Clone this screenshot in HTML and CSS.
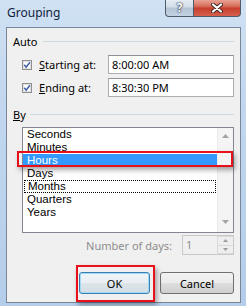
FILE: index.html
```html
<!DOCTYPE html>
<html lang="en">
<head>
    <meta charset="UTF-8">
    <title>Grouping</title>
    <link rel="stylesheet" href="styles.css">
</head>
<body>

    <div class="window">
        <div class="titlebar">
            <span class="title">Grouping</span>
            <div class="caption-btns">
                <div class="cap help">?</div>
                <div class="cap close">
                    <svg width="12" height="10" viewBox="0 0 12 10">
                        <path d="M2 1.5 L10 8.5 M10 1.5 L2 8.5" stroke="#3b2622" stroke-width="4" stroke-linecap="round"/>
                        <path d="M2 1.5 L10 8.5 M10 1.5 L2 8.5" stroke="#fff" stroke-width="2.2" stroke-linecap="round"/>
                    </svg>
                </div>
            </div>
        </div>

        <div class="client">
            <div class="group-head"><span>Auto</span></div>

            <div class="field-row">
                <span class="check">
                    <svg width="10" height="10" viewBox="0 0 10 10">
                        <rect x="0.5" y="0.5" width="9" height="9" fill="#f4f4f4" stroke="#8e8f8f"/>
                        <rect x="1.5" y="1.5" width="7" height="7" fill="#fff" stroke="#e2e2e2"/>
                        <path d="M2.3 4.8 L4.1 7.2 L7.9 2.2" fill="none" stroke="#4261a8" stroke-width="1.5"/>
                    </svg>
                </span>
                <label><u>S</u>tarting at:</label>
                <div class="textbox">8:00:00 AM</div>
            </div>

            <div class="field-row second">
                <span class="check">
                    <svg width="10" height="10" viewBox="0 0 10 10">
                        <rect x="0.5" y="0.5" width="9" height="9" fill="#f4f4f4" stroke="#8e8f8f"/>
                        <rect x="1.5" y="1.5" width="7" height="7" fill="#fff" stroke="#e2e2e2"/>
                        <path d="M2.3 4.8 L4.1 7.2 L7.9 2.2" fill="none" stroke="#4261a8" stroke-width="1.5"/>
                    </svg>
                </span>
                <label><u>E</u>nding at:</label>
                <div class="textbox">8:30:30 PM</div>
            </div>

            <div class="group-head by"><span><u>B</u>y</span></div>

            <div class="listbox">
                <div class="items">
                    <div class="item">Seconds</div>
                    <div class="item">Minutes</div>
                    <div class="item selected">Hours</div>
                    <div class="item">Days</div>
                    <div class="item focused">Months</div>
                    <div class="item">Quarters</div>
                    <div class="item">Years</div>
                </div>
                <div class="scrollbar">
                    <svg width="7" height="4" viewBox="0 0 7 4"><path d="M0 4 L3.5 0 L7 4 Z" fill="#a3a3a3"/></svg>
                    <svg width="7" height="4" viewBox="0 0 7 4"><path d="M0 0 L3.5 4 L7 0 Z" fill="#a3a3a3"/></svg>
                </div>
            </div>

            <div class="days-row">
                <span class="days-label">Number of days:</span>
                <div class="spinner">
                    <span class="spin-value">1</span>
                    <div class="spin-btns">
                        <div class="spin-btn"><svg width="5" height="3" viewBox="0 0 5 3"><path d="M0 3 L2.5 0 L5 3 Z" fill="#9a9a9a"/></svg></div>
                        <div class="spin-btn"><svg width="5" height="3" viewBox="0 0 5 3"><path d="M0 0 L2.5 3 L5 0 Z" fill="#9a9a9a"/></svg></div>
                    </div>
                </div>
            </div>

            <div class="buttons">
                <button class="btn default">OK</button>
                <button class="btn cancel">Cancel</button>
            </div>
        </div>

        <div class="mark mark-hours"></div>
        <div class="mark mark-ok"></div>
    </div>

</body>
</html>
```

FILE: styles.css
```css
body {
    margin: 0;
    width: 246px;
    height: 306px;
    overflow: hidden;
    font-family: "Noto Sans", "DejaVu Sans", sans-serif;
    font-size: 11px;
    color: #000;
}
.window {
    position: relative;
    height: 306px;
    box-sizing: border-box;
    padding: 0 5px 3px 6px;
    display: flex;
    flex-direction: column;
    background: linear-gradient(180deg, #d0e1f3 0%, #c3d8ef 30%, #b4cdea 100%);
}
.titlebar {
    height: 27px;
    display: flex;
    align-items: flex-start;
}
.title {
    margin: 5px 0 0 1px;
    font-size: 12px;
    line-height: 16px;
    color: #0f2340;
}
.caption-btns {
    margin-left: auto;
    margin-top: -1px;
    display: flex;
}
.cap {
    height: 18px;
    box-sizing: border-box;
    border: 1px solid #4f5b6b;
    border-top: none;
    display: flex;
    align-items: center;
    justify-content: center;
}
.help {
    width: 28px;
    border-right: none;
    border-radius: 0 0 0 4px;
    background: linear-gradient(180deg, #e7eef6 0%, #d3dee9 45%, #b5c4d5 55%, #c3d2e2 100%);
    color: #fff;
    font-size: 12px;
    font-weight: bold;
    text-shadow: 0 0 1px #2d3a4a, 0 0 1px #2d3a4a, 0 0 2px #2d3a4a;
}
.close {
    width: 48px;
    border-radius: 0 0 4px 0;
    background: linear-gradient(180deg, #e9ab9e 0%, #d9725f 40%, #c7402e 55%, #d5604c 100%);
}
.client {
    flex: 1;
    background: #f0f0f0;
    border: 1px solid #7a8798;
    padding: 0 6px 8px 6px;
}
.group-head {
    display: flex;
    align-items: center;
    height: 13px;
    margin-top: 7px;
}
.group-head::after {
    content: "";
    flex: 1;
    height: 1px;
    margin-left: 6px;
    background: #cbd8e0;
}
.group-head.by {
    margin-top: 11px;
}
.group-head.by::after {
    margin-left: 4px;
}
.field-row {
    display: flex;
    align-items: center;
    height: 19px;
    margin-top: 7px;
    padding-left: 9px;
}
.field-row.second {
    margin-top: 4px;
}
.check {
    display: flex;
    width: 10px;
    height: 10px;
}
.field-row label {
    flex: 0 0 69px;
    margin-left: 7px;
}
.textbox {
    flex: 1;
    height: 19px;
    box-sizing: border-box;
    border: 1px solid #abadb3;
    border-top-color: #8d9097;
    background: #fff;
    padding-left: 3px;
    line-height: 17px;
}
.listbox {
    display: flex;
    height: 106px;
    box-sizing: border-box;
    margin: 6px 0 0 9px;
    border: 1px solid #828790;
    background: #fff;
}
.items {
    flex: 1;
    font-family: "Liberation Sans", Arial, sans-serif;
    font-size: 11.5px;
}
.item {
    height: 13px;
    line-height: 13px;
    padding-left: 4px;
    box-sizing: border-box;
}
.item.selected {
    background: #3399ff;
    color: #fff;
}
.item.focused {
    border: 1px dotted #000;
    padding-left: 3px;
    line-height: 11px;
    margin-left: 1px;
    margin-right: 1px;
}
.scrollbar {
    width: 16px;
    background: #f4f4f4;
    border-left: 1px solid #ececec;
    box-sizing: border-box;
    display: flex;
    flex-direction: column;
    align-items: center;
    justify-content: space-between;
    padding: 6px 0 8px;
}
.days-row {
    display: flex;
    align-items: center;
    justify-content: flex-end;
    height: 20px;
    margin-top: 2px;
}
.days-label {
    color: #8d8d8d;
    margin-right: 10px;
}
.spinner {
    width: 52px;
    height: 20px;
    box-sizing: border-box;
    border: 1px solid #c9c9c9;
    background: #f0f0f0;
    display: flex;
}
.spin-value {
    flex: 1;
    color: #8d8d8d;
    padding-left: 3px;
    line-height: 18px;
}
.spin-btns {
    width: 16px;
    display: flex;
    flex-direction: column;
}
.spin-btn {
    flex: 1;
    display: flex;
    align-items: center;
    justify-content: center;
    background: #eeeeee;
    border: 1px solid #dadada;
    border-right: none;
}
.spin-btn + .spin-btn {
    border-top: none;
}
.buttons {
    display: flex;
    justify-content: flex-end;
    gap: 10px;
    margin-top: 17px;
}
.btn {
    height: 22px;
    box-sizing: border-box;
    border: 1px solid #707070;
    border-radius: 3px;
    background: linear-gradient(180deg, #f2f2f2 0%, #ebebeb 50%, #dddddd 51%, #cfcfcf 100%);
    font-family: "Noto Sans", "DejaVu Sans", sans-serif;
    font-size: 11px;
    color: #000;
    padding: 0;
}
.btn.default {
    width: 71px;
    border-color: #3c7fb1;
    box-shadow: inset 0 0 0 1px #9edaf5;
    background: linear-gradient(180deg, #f0f5f8 0%, #e8eef2 50%, #dde5ea 51%, #d3dde3 100%);
}
.btn.cancel {
    width: 74px;
}
.mark {
    position: absolute;
    box-sizing: border-box;
    border: 2px solid #e8111b;
    box-shadow: 2px 3px 5px rgba(0, 0, 0, 0.35);
}
.mark-hours {
    left: 17px;
    top: 151px;
    width: 216px;
    height: 16px;
}
.mark-ok {
    left: 76px;
    top: 265px;
    width: 79px;
    height: 37px;
}
```
